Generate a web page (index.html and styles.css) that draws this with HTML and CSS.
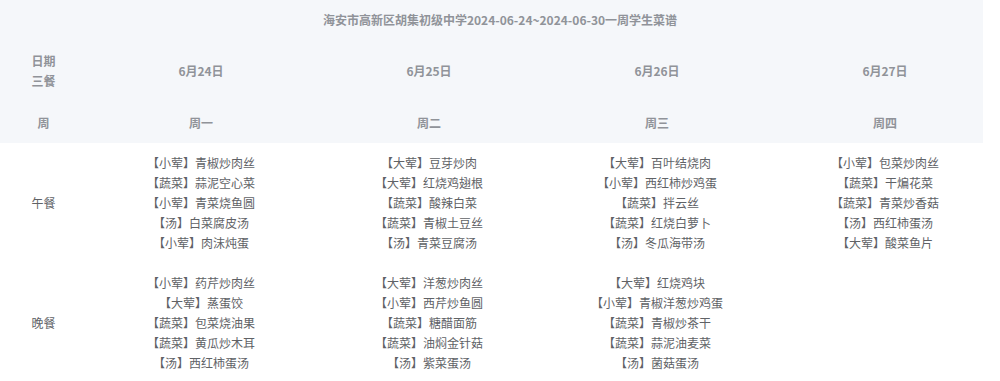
FILE: index.html
```html
<!DOCTYPE html>
<html lang="zh-CN">
<head>
<meta charset="utf-8">
<title>学生菜谱</title>
<link rel="stylesheet" href="styles.css">
</head>
<body>
<div class="menu">
  <div class="head">
    <div class="title">海安市高新区胡集初级中学2024-06-24~2024-06-30一周学生菜谱</div>
    <table class="grid">
      <colgroup><col class="c0"><col class="cd"><col class="cd"><col class="cd"><col class="cd"></colgroup>
      <tr class="date-row">
        <th><div>日期</div><div>三餐</div></th>
        <th>6月24日</th><th>6月25日</th><th>6月26日</th><th>6月27日</th>
      </tr>
      <tr class="week-row">
        <th>周</th><th>周一</th><th>周二</th><th>周三</th><th>周四</th>
      </tr>
    </table>
  </div>
  <table class="grid body">
    <colgroup><col class="c0"><col class="cd"><col class="cd"><col class="cd"><col class="cd"></colgroup>
    <tr class="meal">
      <td class="label">午餐</td>
      <td><div>【小荤】青椒炒肉丝</div><div>【蔬菜】蒜泥空心菜</div><div>【小荤】青菜烧鱼圆</div><div>【汤】白菜腐皮汤</div><div>【小荤】肉沫炖蛋</div></td>
      <td><div>【大荤】豆芽炒肉</div><div>【大荤】红烧鸡翅根</div><div>【蔬菜】酸辣白菜</div><div>【蔬菜】青椒土豆丝</div><div>【汤】青菜豆腐汤</div></td>
      <td><div>【大荤】百叶结烧肉</div><div>【小荤】西红柿炒鸡蛋</div><div>【蔬菜】拌云丝</div><div>【蔬菜】红烧白萝卜</div><div>【汤】冬瓜海带汤</div></td>
      <td><div>【小荤】包菜炒肉丝</div><div>【蔬菜】干煸花菜</div><div>【蔬菜】青菜炒香菇</div><div>【汤】西红柿蛋汤</div><div>【大荤】酸菜鱼片</div></td>
    </tr>
    <tr class="meal">
      <td class="label">晚餐</td>
      <td><div>【小荤】药芹炒肉丝</div><div>【大荤】蒸蛋饺</div><div>【蔬菜】包菜烧油果</div><div>【蔬菜】黄瓜炒木耳</div><div>【汤】西红柿蛋汤</div></td>
      <td><div>【大荤】洋葱炒肉丝</div><div>【小荤】西芹炒鱼圆</div><div>【蔬菜】糖醋面筋</div><div>【蔬菜】油焖金针菇</div><div>【汤】紫菜蛋汤</div></td>
      <td><div>【大荤】红烧鸡块</div><div>【小荤】青椒洋葱炒鸡蛋</div><div>【蔬菜】青椒炒茶干</div><div>【蔬菜】蒜泥油麦菜</div><div>【汤】菌菇蛋汤</div></td>
      <td></td>
    </tr>
  </table>
</div>
</body>
</html>
```

FILE: styles.css
```css
html, body {
  margin: 0;
  padding: 0;
  background: #ffffff;
}

body {
  font-family: "Noto Sans CJK SC", "Noto Sans", "Liberation Sans", sans-serif;
  font-size: 12px;
}

.menu {
  width: 983px;
  overflow: hidden;
}

.head {
  background: #f5f7fa;
  color: #909399;
  font-weight: bold;
}

.title {
  height: 40px;
  line-height: 40px;
  text-align: center;
  padding-left: 17px;
}

.grid {
  border-collapse: collapse;
  table-layout: fixed;
  width: 999px;
}

.c0 { width: 87px; }
.cd { width: 228px; }

.grid th,
.grid td {
  padding: 0;
  text-align: center;
  vertical-align: middle;
}

.date-row th {
  height: 62px;
  line-height: 20px;
}

.week-row th {
  height: 41px;
}

.body {
  color: #606266;
}

.meal td {
  height: 120px;
  line-height: 20px;
  padding: 10px 0;
  box-sizing: border-box;
}
```
